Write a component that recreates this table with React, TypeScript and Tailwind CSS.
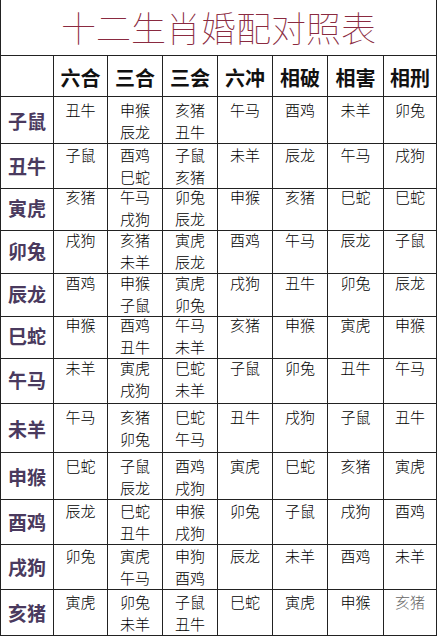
import React from "react";

const headers = ["六合", "三合", "三会", "六冲", "相破", "相害", "相刑"];

type Row = { label: string; h: string; cells: string[][] };

const rows: Row[] = [
  { label: "子鼠", h: "h-[45px]", cells: [["丑牛"], ["申猴", "辰龙"], ["亥猪", "丑牛"], ["午马"], ["酉鸡"], ["未羊"], ["卯兔"]] },
  { label: "丑牛", h: "h-[42px]", cells: [["子鼠"], ["酉鸡", "巳蛇"], ["子鼠", "亥猪"], ["未羊"], ["辰龙"], ["午马"], ["戌狗"]] },
  { label: "寅虎", h: "h-[43px]", cells: [["亥猪"], ["午马", "戌狗"], ["卯兔", "辰龙"], ["申猴"], ["亥猪"], ["巳蛇"], ["巳蛇"]] },
  { label: "卯兔", h: "h-[43px]", cells: [["戌狗"], ["亥猪", "未羊"], ["寅虎", "辰龙"], ["酉鸡"], ["午马"], ["辰龙"], ["子鼠"]] },
  { label: "辰龙", h: "h-[42px]", cells: [["酉鸡"], ["申猴", "子鼠"], ["寅虎", "卯兔"], ["戌狗"], ["丑牛"], ["卯兔"], ["辰龙"]] },
  { label: "巳蛇", h: "h-[43px]", cells: [["申猴"], ["酉鸡", "丑牛"], ["午马", "未羊"], ["亥猪"], ["申猴"], ["寅虎"], ["申猴"]] },
  { label: "午马", h: "h-[49px]", cells: [["未羊"], ["寅虎", "戌狗"], ["巳蛇", "未羊"], ["子鼠"], ["卯兔"], ["丑牛"], ["午马"]] },
  { label: "未羊", h: "h-[49px]", cells: [["午马"], ["亥猪", "卯兔"], ["巳蛇", "午马"], ["丑牛"], ["戌狗"], ["子鼠"], ["丑牛"]] },
  { label: "申猴", h: "h-[45px]", cells: [["巳蛇"], ["子鼠", "辰龙"], ["酉鸡", "戌狗"], ["寅虎"], ["巳蛇"], ["亥猪"], ["寅虎"]] },
  { label: "酉鸡", h: "h-[45px]", cells: [["辰龙"], ["巳蛇", "丑牛"], ["申猴", "戌狗"], ["卯兔"], ["子鼠"], ["戌狗"], ["酉鸡"]] },
  { label: "戌狗", h: "h-[46px]", cells: [["卯兔"], ["寅虎", "午马"], ["申狗", "酉鸡"], ["辰龙"], ["未羊"], ["酉鸡"], ["未羊"]] },
  { label: "亥猪", h: "h-[47px]", cells: [["寅虎"], ["卯兔", "未羊"], ["子鼠", "丑牛"], ["巳蛇"], ["寅虎"], ["申猴"], ["亥猪"]] },
];

const cols = "grid grid-cols-[53px_54px_55px_55px_55px_55px_56px_53px]";

export default function App() {
  return (
    <div className="w-[440px] h-[637px] bg-white font-['Noto_Sans_CJK_SC',sans-serif] text-[#111]">
      <div className="w-[437px] border-l border-[#222]">
        <div className="h-[56px] border-r border-b border-[#222] flex items-center justify-center">
          <span className="text-[35px] font-thin leading-none text-[#8a2a40] tracking-[0px] -mt-[3px]">
            十二生肖婚配对照表
          </span>
        </div>
        <div className={`${cols} h-[41px]`}>
          <div className="border-r border-b border-[#222]" />
          {headers.map((h) => (
            <div
              key={h}
              className="border-r border-b border-[#222] flex items-center justify-center pt-[3px] text-[20px] font-bold leading-none text-[#111]"
            >
              {h}
            </div>
          ))}
        </div>
        {rows.map((r) => (
          <div key={r.label} className={`${cols} ${r.h}`}>
            <div className="border-r border-b border-[#222] flex items-center justify-center text-[19px] font-bold leading-none text-[#4a3a5e]">
              {r.label}
            </div>
            {r.cells.map((c, i) => (
              <div
                key={i}
                className="border-r border-b border-[#222] flex flex-col items-center pt-[2px] text-[15px] leading-[22px] font-light text-black"
              >
                {c.map((t, j) => (
                  <span
                    key={j}
                    className={r.label === "亥猪" && i === 6 ? "text-[#666]" : ""}
                  >
                    {t}
                  </span>
                ))}
              </div>
            ))}
          </div>
        ))}
      </div>
    </div>
  );
}
